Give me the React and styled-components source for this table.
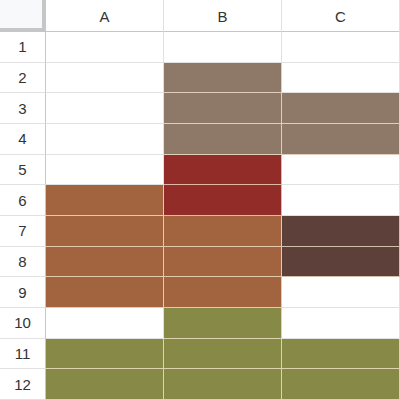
import { Fragment } from "react";
import styled, { createGlobalStyle } from "styled-components";

const GlobalStyle = createGlobalStyle`
  html, body {
    margin: 0;
    padding: 0;
    background: #ffffff;
  }
`;

const fills = {
  taupe: "#8e7868",
  red: "#912c29",
  orange: "#a1643e",
  brown: "#5d4039",
  olive: "#878a47",
};

// rows 1..12, columns A..C
const data = [
  [null, null, null],
  [null, "taupe", null],
  [null, "taupe", "taupe"],
  [null, "taupe", "taupe"],
  [null, "red", null],
  ["orange", "red", null],
  ["orange", "orange", "brown"],
  ["orange", "orange", "brown"],
  ["orange", "orange", null],
  [null, "olive", null],
  ["olive", "olive", "olive"],
  ["olive", "olive", "olive"],
];

const Sheet = styled.div`
  display: grid;
  grid-template-columns: 46px repeat(3, 1fr);
  grid-template-rows: 32px repeat(12, 1fr);
  width: 400px;
  height: 400px;
  font-family: "Liberation Sans", Arial, sans-serif;
  color: #333333;
  overflow: hidden;
`;

const Corner = styled.div`
  background: #f8f9fa;
  border-right: 4px solid #c4c7c5;
  border-bottom: 4px solid #c4c7c5;
  box-shadow: 1px 1px 0 #e1e1e1;
`;

const ColHead = styled.div`
  display: flex;
  align-items: center;
  justify-content: center;
  background: #ffffff;
  border-right: 1px solid #e1e1e1;
  border-bottom: 1px solid #c4c7c5;
  padding-top: 1px;
  font-size: 15px;
`;

const RowHead = styled.div`
  display: flex;
  align-items: center;
  justify-content: center;
  background: #ffffff;
  border-right: 1px solid #c4c7c5;
  border-bottom: 1px solid #e1e1e1;
  font-size: 15px;
`;

const Cell = styled.div`
  background: ${({ $fill }) => ($fill ? fills[$fill] : "#ffffff")};
  border-right: 1px solid
    ${({ $fill }) => ($fill ? "rgba(255, 240, 215, 0.72)" : "#e1e1e1")};
  border-bottom: 1px solid
    ${({ $fill }) => ($fill ? "rgba(255, 240, 215, 0.72)" : "#e1e1e1")};
`;

export default function App() {
  return (
    <>
      <GlobalStyle />
      <Sheet>
        <Corner />
        {["A", "B", "C"].map((c) => (
          <ColHead key={c}>{c}</ColHead>
        ))}
        {data.map((row, i) => (
          <Fragment key={i}>
            <RowHead>{i + 1}</RowHead>
            {row.map((f, j) => (
              <Cell key={j} $fill={f} />
            ))}
          </Fragment>
        ))}
      </Sheet>
    </>
  );
}
